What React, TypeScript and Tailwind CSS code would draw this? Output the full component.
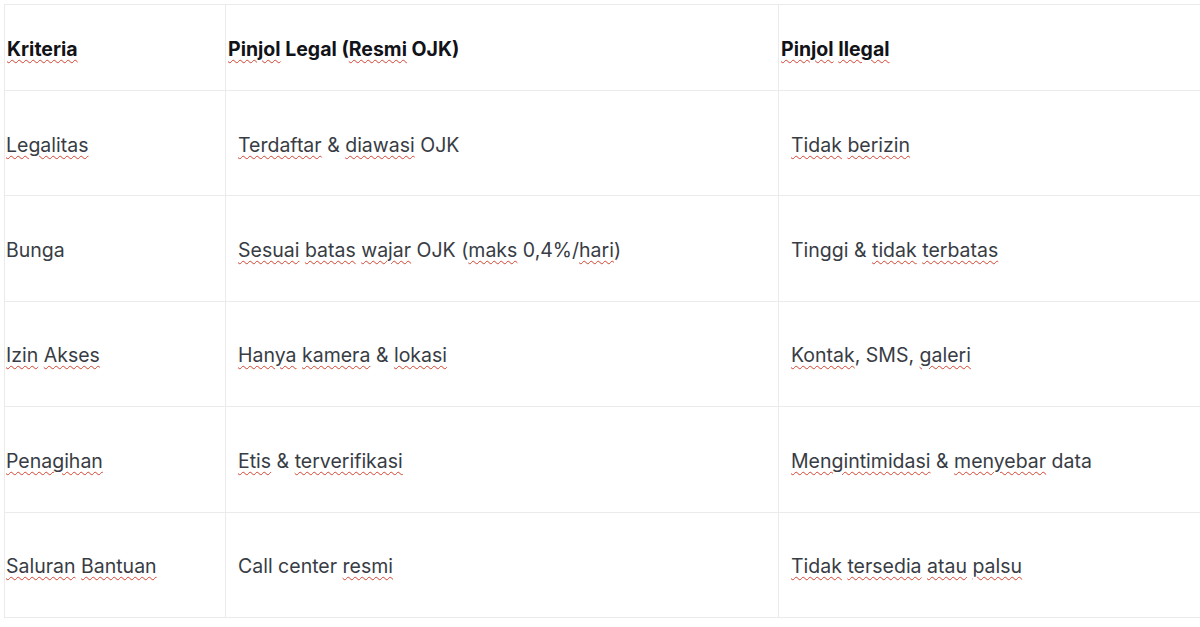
import React from "react"

// words wrapped in ~ ~ get the spellcheck squiggle
function Marked({ text }: { text: string }) {
  const parts = text.split(/(~[^~]+~)/)
  return (
    <>
      {parts.map((p, i) =>
        p.startsWith("~") ? (
          <span
            key={i}
            className="underline decoration-wavy decoration-[#d4432f] decoration-[1px] underline-offset-[3px]"
          >
            {p.slice(1, -1)}
          </span>
        ) : (
          <span key={i}>{p}</span>
        )
      )}
    </>
  )
}

const header = ["~Kriteria~", "~Pinjol~ Legal (~Resmi~ OJK)", "~Pinjol~ ~Ilegal~"]

const rows = [
  ["~Legalitas~", "~Terdaftar~ & ~diawasi~ OJK", "~Tidak~ ~berizin~"],
  ["Bunga", "~Sesuai~ ~batas~ ~wajar~ OJK (~maks~ 0,4%/~hari~)", "Tinggi & ~tidak~ ~terbatas~"],
  ["~Izin~ ~Akses~", "~Hanya~ ~kamera~ & ~lokasi~", "~Kontak~, SMS, ~galeri~"],
  ["~Penagihan~", "~Etis~ & ~terverifikasi~", "~Mengintimidasi~ & ~menyebar~ data"],
  ["~Saluran~ ~Bantuan~", "Call center ~resmi~", "~Tidak~ ~tersedia~ ~atau~ ~palsu~"],
]

export default function App() {
  return (
    <div className="w-[1200px] h-[627px] overflow-hidden bg-white pl-[4px] pt-[4px] font-['Inter',sans-serif]">
      <table className="border-collapse w-[1230px] table-fixed">
        <colgroup>
          <col className="w-[221px]" />
          <col className="w-[553px]" />
          <col />
        </colgroup>
        <thead>
          <tr className="h-[86px]">
            {header.map((h, i) => (
              <th
                key={i}
                className="border border-[#ebebeb] text-left align-middle pl-[2px] pt-[4px] text-[19.5px] font-bold text-[#111318]"
              >
                <Marked text={h} />
              </th>
            ))}
          </tr>
        </thead>
        <tbody>
          {rows.map((r, ri) => (
            <tr key={ri} className="h-[105.4px]">
              {r.map((c, ci) => (
                <td
                  key={ci}
                  className={`border border-[#ebebeb] align-middle pt-[4px] text-[19.5px] text-[#383c44] ${
                    ci === 0 ? "pl-[1px]" : "pl-[12px]"
                  }`}
                >
                  <Marked text={c} />
                </td>
              ))}
            </tr>
          ))}
        </tbody>
      </table>
    </div>
  )
}
